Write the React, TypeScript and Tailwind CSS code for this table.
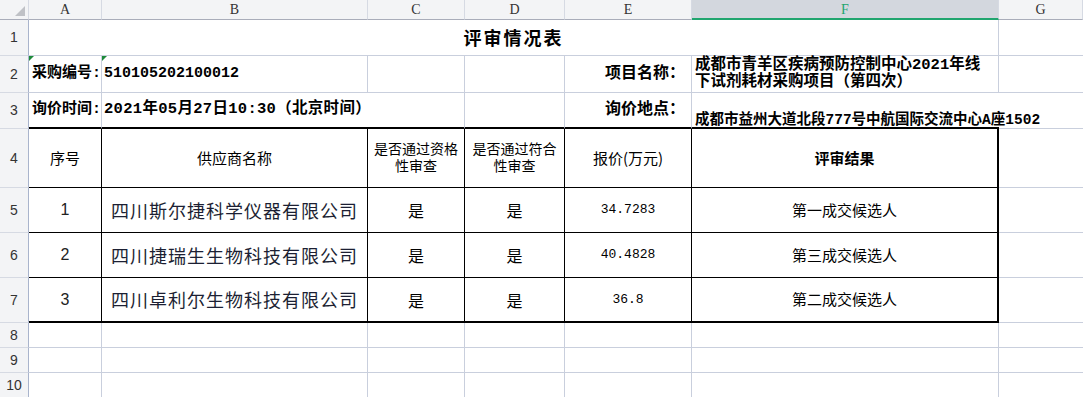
import React from 'react';

// spreadsheet style review sheet (评审情况表)
const cols = ['A', 'B', 'C', 'D', 'E', 'F', 'G'];

const MONO = "font-['Liberation_Mono','Noto_Sans_CJK_SC',monospace]";
const CJK = "font-['Noto_Sans_CJK_SC','Liberation_Sans',sans-serif]";
const TIGHT = "font-['Liberation_Sans','Noto_Sans_CJK_SC',sans-serif]";

const rows = [
  { no: '1', name: '四川斯尔捷科学仪器有限公司', price: '34.7283', result: '第一成交候选人' },
  { no: '2', name: '四川捷瑞生生物科技有限公司', price: '40.4828', result: '第三成交候选人' },
  { no: '3', name: '四川卓利尔生物科技有限公司', price: '36.8', result: '第二成交候选人' },
];

const RowHead: React.FC<{ n: number }> = ({ n }) => (
  <div className="flex items-center justify-center border-r border-b border-r-[#a9b4cc] border-b-[#d6dae3] bg-[#f3f4f6] font-['Liberation_Sans',sans-serif] text-[14px] text-[#333]">
    {n}
  </div>
);

const Flag: React.FC = () => (
  <span className="absolute left-0 top-0 h-0 w-0 border-t-[5px] border-r-[5px] border-t-[#1e8a3a] border-r-transparent" />
);

const App: React.FC = () => {
  const grid = 'border-[#c9cfdd]';

  return (
    <div className="h-[397px] w-[1083px] overflow-hidden bg-white text-black">
      <div className="grid grid-cols-[29px_73px_266px_97px_100px_127px_307px_1fr] grid-rows-[20px_36px_37px_36px_59px_45px_45px_45px_25px_25px_25px]">
        {/* column headers */}
        <div className="relative border-r border-b border-r-[#d6dae3] border-b-[#a9adba] bg-[#f3f4f6]">
          <span className="absolute left-[15px] top-[6px] h-0 w-0 border-b-[10px] border-l-[10px] border-b-[#bfc1c6] border-l-transparent" />
        </div>
        {cols.map(c =>
          c === 'F' ? (
            <div key={c} className="flex items-center justify-center border-r border-b-2 border-r-[#d6dae3] border-b-[#21a56f] bg-[#d3d7de] font-['Liberation_Serif',serif] text-[14px] text-[#21a56f]">
              {c}
            </div>
          ) : (
            <div key={c} className="flex items-center justify-center border-r border-b border-r-[#d6dae3] border-b-[#a9adba] bg-[#f3f4f6] font-['Liberation_Serif',serif] text-[14px] text-[#333]">
              {c}
            </div>
          )
        )}

        {/* row 1 */}
        <RowHead n={1} />
        <div className={`col-span-6 flex items-center justify-center border-r border-b ${grid} ${CJK} text-[18px] font-bold tracking-[2px]`}>
          评审情况表
        </div>
        <div className={`border-b ${grid}`} />

        {/* row 2 */}
        <RowHead n={2} />
        <div className={`relative flex items-center whitespace-nowrap border-r border-b ${grid} pl-[3px] ${MONO} text-[15px] font-bold`}>
          <Flag />
          采购编号:
        </div>
        <div className={`relative flex items-center whitespace-nowrap border-r border-b ${grid} pl-[2px] ${MONO} text-[15px] font-bold`}>
          <Flag />
          510105202100012
        </div>
        <div className={`border-r border-b ${grid}`} />
        <div className={`border-r border-b ${grid}`} />
        <div className={`flex items-center justify-end whitespace-nowrap border-r border-b ${grid} pr-[6px] ${MONO} text-[16px] font-bold`}>
          项目名称：
        </div>
        <div className={`flex items-center whitespace-nowrap border-r border-b ${grid} pl-[3px] ${MONO} text-[15.5px] font-bold leading-[17px]`}>
          <span>
            成都市青羊区疾病预防控制中心2021年线
            <br />
            下试剂耗材采购项目（第四次）
          </span>
        </div>
        <div className={`border-b ${grid}`} />

        {/* row 3 */}
        <RowHead n={3} />
        <div className={`flex items-center whitespace-nowrap border-r border-b-2 ${grid} border-b-black pl-[3px] ${MONO} text-[15px] font-bold`}>
          询价时间:
        </div>
        <div className={`flex items-center whitespace-nowrap border-b-2 border-b-black pl-[2px] ${MONO} text-[15.5px] font-bold tracking-[0.3px]`}>
          2021年05月27日10:30（北京时间）
        </div>
        <div className={`border-r border-b-2 ${grid} border-b-black`} />
        <div className={`border-r border-b-2 ${grid} border-b-black`} />
        <div className={`flex items-center justify-end whitespace-nowrap border-r border-b-2 ${grid} border-b-black pr-[6px] ${MONO} text-[16px] font-bold`}>
          询价地点：
        </div>
        <div className={`relative z-10 flex items-end whitespace-nowrap border-b-2 border-b-black pl-[3px] ${MONO} text-[14.5px] font-bold leading-[14px]`}>
          成都市益州大道北段777号中航国际交流中心A座1502
        </div>
        <div className={`border-b ${grid}`} />

        {/* row 4: table head */}
        <RowHead n={4} />
        <div className={`flex items-center justify-center border-r border-b border-black ${CJK} text-[15px]`}>序号</div>
        <div className={`flex items-center justify-center border-r border-b border-black ${CJK} text-[15px]`}>供应商名称</div>
        <div className={`flex flex-col items-center justify-center border-r border-b border-black ${TIGHT} text-center text-[14px] leading-[17px]`}>
          <span>是否通过资格</span>
          <span>性审查</span>
        </div>
        <div className={`flex flex-col items-center justify-center border-r border-b border-black ${TIGHT} text-center text-[14px] leading-[17px]`}>
          <span>是否通过符合</span>
          <span>性审查</span>
        </div>
        <div className={`flex items-center justify-center border-r border-b border-black ${CJK} text-[15px]`}>报价(万元)</div>
        <div className={`flex items-center justify-center border-r-2 border-b border-black ${CJK} text-[15px] font-bold`}>评审结果</div>
        <div className={`border-b ${grid}`} />

        {/* rows 5-7 */}
        {rows.map((r, i) => {
          const last = i === rows.length - 1;
          const bb = last ? 'border-b-2' : 'border-b';
          return (
            <React.Fragment key={r.no}>
              <RowHead n={5 + i} />
              <div className={`flex items-center justify-center border-r ${bb} border-black font-['Liberation_Sans',sans-serif] text-[16px] text-[#222]`}>
                {r.no}
              </div>
              <div className={`flex items-center justify-center border-r ${bb} border-black ${CJK} text-[18px] tracking-[1px] text-[#1c1f33]`}>
                {r.name}
              </div>
              <div className={`flex items-center justify-center border-r ${bb} border-black ${CJK} text-[16px]`}>是</div>
              <div className={`flex items-center justify-center border-r ${bb} border-black ${CJK} text-[16px]`}>是</div>
              <div className={`flex items-center justify-center border-r ${bb} border-black ${MONO} text-[13px]`}>{r.price}</div>
              <div className={`flex items-center justify-center border-r-2 ${bb} border-black ${CJK} text-[15px]`}>{r.result}</div>
              <div className={`border-b ${grid}`} />
            </React.Fragment>
          );
        })}

        {/* empty rows 8-10 */}
        {[8, 9, 10].map(n => (
          <React.Fragment key={n}>
            <RowHead n={n} />
            {cols.map(c => (
              <div key={c} className={`${c === 'G' ? '' : 'border-r'} border-b ${grid}`} />
            ))}
          </React.Fragment>
        ))}
      </div>
    </div>
  );
};

export default App;
